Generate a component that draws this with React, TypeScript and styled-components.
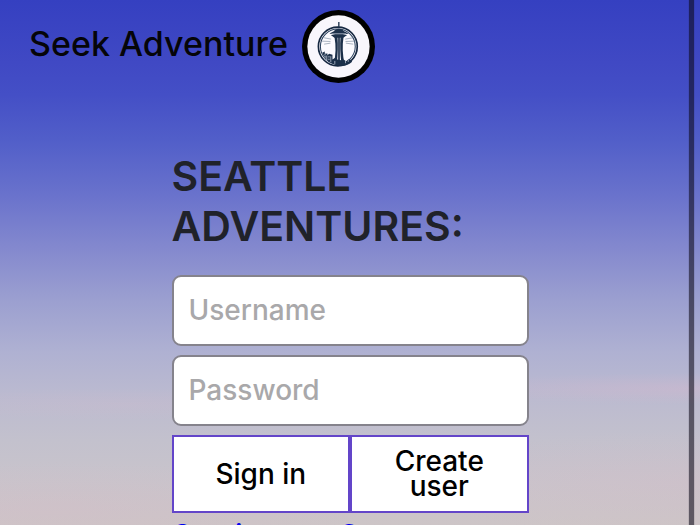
import React from "react";
import styled, { createGlobalStyle } from "styled-components";

const GlobalStyle = createGlobalStyle`
  * { box-sizing: border-box; }
  html, body, #root { height: 100%; }
  body {
    margin: 0;
    overflow: hidden;
    font-family: Inter, "Liberation Sans", sans-serif;
    font-weight: 500;
  }
`;

const Page = styled.div`
  position: relative;
  height: 100%;
  overflow: hidden;
  background:
    radial-gradient(ellipse 38% 3% at 100% 74%, rgba(218, 183, 204, 0.35), transparent),
    radial-gradient(ellipse 30% 3% at 18% 77%, rgba(214, 187, 204, 0.2), transparent),
    radial-gradient(ellipse 45% 10% at 100% 92%, rgba(214, 186, 200, 0.3), transparent),
    radial-gradient(ellipse 45% 9% at 8% 97%, rgba(214, 186, 200, 0.3), transparent),
    linear-gradient(
      180deg,
      #3540c1 0%,
      #4049c4 12%,
      #444fc6 18%,
      #525fc9 27%,
      #6972cc 37%,
      #8388ce 47%,
      #9b9fd0 57%,
      #afb1d2 67%,
      #bbbad0 75%,
      #c3c1cd 84%,
      #c9c4cb 92%,
      #cdc5c7 100%
    );
`;

const Header = styled.header`
  display: flex;
  align-items: flex-start;
  gap: 14px;
  padding: 10px 29px 0;
`;

const Brand = styled.span`
  color: #050509;
  font-size: 34px;
  line-height: 67px;
  white-space: nowrap;
`;

const Logo = styled.svg`
  display: block;
  flex: none;
  width: 73px;
  height: 73px;
`;

const Main = styled.main`
  width: 51%;
  min-width: 356px;
  margin: 68px auto 0;
`;

const Title = styled.h1`
  margin: 0 0 24px;
  color: #20222a;
  font-size: 41px;
  font-weight: 600;
  line-height: 50px;
`;

const Form = styled.form`
  display: flex;
  flex-direction: column;
  gap: 9px;
`;

const Field = styled.input`
  width: 100%;
  height: 71px;
  padding: 0 15px 2px;
  border: 2px solid #85838c;
  border-radius: 9px;
  background: #fff;
  color: #050509;
  font: inherit;
  font-size: 28px;
  &::placeholder {
    color: #a9a8aa;
    opacity: 1;
  }
`;

const Actions = styled.div`
  display: grid;
  grid-template-columns: 1fr 1fr;
`;

const Action = styled.button`
  height: 78px;
  padding: 0 36px;
  border: 2px solid #6345c9;
  border-radius: 0;
  background: #fff;
  color: #000;
  font: inherit;
  font-size: 28px;
  line-height: 25px;
`;

const GuestLink = styled.a`
  display: inline-block;
  margin-top: 5px;
  color: #0000ee;
  font-size: 28px;
  line-height: 34px;
`;

const ScrollThumb = styled.div`
  position: absolute;
  top: 0;
  right: 6px;
  bottom: 0;
  width: 5px;
  background: rgba(12, 8, 24, 0.58);
  box-shadow: 0 0 1px rgba(30, 30, 50, 0.6);
`;

const NeedleLogo = () => (
  <Logo viewBox="34 28 218 218" role="img" aria-label="Space Needle emblem">
    <circle cx="143" cy="137" r="109" fill="#000" />
    <circle cx="143" cy="137" r="93" fill="#f8f6fc" />
    <circle cx="141" cy="137" r="58" fill="none" stroke="#152740" strokeWidth="5" />
    <circle cx="141" cy="137" r="52" fill="#fbfaff" stroke="#283f5c" strokeWidth="3" />
    <g fill="none" stroke="#8190a2" strokeWidth="2">
      <path d="M100 111l21 4M94 121l25 1M100 130l19-3M163 115l23-4M164 122l29-1M165 127l22 3" />
    </g>
    <g fill="#1c304a">
      <path d="M94 156l8-4v7l8-1v5l5-4 10 3v14l7-5 7 5 12 2 7-2 8 5 6-5 11 1v6c-22 19-66 18-89-27z" />
      <path d="M142 64h4v18h-4z" />
      <path d="M130 91c5-9 23-9 28 0z" />
      <path d="M116 98l16-8h25l16 8-17 5h-23z" />
      <path d="M120 103h49l-12 8h-26z" />
      <path d="M131 109h9c2 25 1 49-2 80h-9c6-28 7-52 2-80zM149 109h9c-4 28-3 52 3 80h-9c-4-31-5-55-3-80z" />
      <path d="M142 109h5v80h-5z" />
    </g>
    <g fill="none" stroke="#dce3ef" strokeWidth="2">
      <path d="M122 99h44M108 164v15M120 166v18M132 180v9M164 180v7M172 177v6" />
      <path d="M100 162h5M101 168h5M112 168h5M112 175h5" />
    </g>
  </Logo>
);

export default function App() {
  return (
    <>
      <GlobalStyle />
      <Page>
        <Header>
          <Brand>Seek Adventure</Brand>
          <NeedleLogo />
        </Header>
        <Main>
          <Title>SEATTLE ADVENTURES:</Title>
          <Form onSubmit={(event) => event.preventDefault()}>
            <Field type="text" placeholder="Username" aria-label="Username" autoComplete="username" />
            <Field type="password" placeholder="Password" aria-label="Password" autoComplete="current-password" />
            <Actions>
              <Action type="submit">Sign in</Action>
              <Action type="button">Create user</Action>
            </Actions>
          </Form>
          <GuestLink href="#guest">Continue as Guest</GuestLink>
        </Main>
        <ScrollThumb />
      </Page>
    </>
  );
}
